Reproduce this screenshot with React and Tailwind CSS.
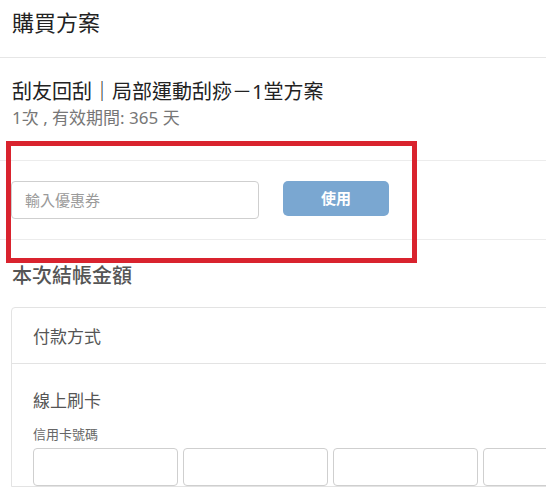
import React from 'react';

const FONT = { fontFamily: '"Noto Sans", "Noto Sans CJK TC", sans-serif' };

export default function App() {
  return (
    <div className="relative h-screen w-full overflow-hidden bg-white text-[#333]" style={FONT}>
      {/* Header */}
      <div className="h-[58px] border-b border-[#e6e6e6] pl-3 pt-[6px]">
        <h1 className="text-[22px] leading-[32px] text-[#222]">購買方案</h1>
      </div>

      {/* Plan info */}
      <div className="h-[103px] border-b border-[#ececec] pl-3 pt-[20px]">
        <div className="text-[20px] leading-[28px] text-[#222]">刮友回刮｜局部運動刮痧－1堂方案</div>
        <div className="text-[17px] leading-[24px] text-[#777]">1次 , 有效期間: 365 天</div>
      </div>

      {/* Coupon */}
      <div className="flex h-[79px] items-start gap-6 border-b border-[#ececec] pt-[20px] pl-[11px]">
        <input
          className="h-[38px] w-[248px] rounded border border-[#cfcfcf] px-[13px] text-[15px] text-[#333] outline-none placeholder:text-[#9a9a9a]"
          placeholder="輸入優惠券"
        />
        <button className="h-[35px] w-[106px] rounded-[5px] bg-[#7aa7d1] text-[15px] font-bold text-white">使用</button>
      </div>

      {/* Checkout */}
      <div className="pl-3 pt-[22px]">
        <div className="text-[20px] leading-[28px] font-medium text-[#555]">本次結帳金額</div>
      </div>

      <div className="ml-[11px] mt-[17px] w-[680px] rounded-t border border-[#e3e3e3]">
        <div className="h-[56px] border-b border-[#e3e3e3] pl-[21px] pt-[17px]">
          <div className="text-[17px] leading-[24px] text-[#555]">付款方式</div>
        </div>
        <div className="pl-[21px] pt-[25px]">
          <div className="text-[17px] leading-[24px] text-[#555]">線上刷卡</div>
          <div className="mt-[12px] text-[13px] leading-[18px] text-[#666]">信用卡號碼</div>
          <div className="mt-[5px] flex gap-[5px]">
            {[0, 1, 2, 3].map((i) => (
              <input key={i} className="h-[38px] w-[145px] rounded-[4px] border border-[#cfcfcf] outline-none" />
            ))}
          </div>
        </div>
      </div>

      {/* Red annotation box */}
      <div className="pointer-events-none absolute left-[6px] top-[141px] h-[122px] w-[411px] border-[5px] border-[#d9232e]" />
    </div>
  );
}
